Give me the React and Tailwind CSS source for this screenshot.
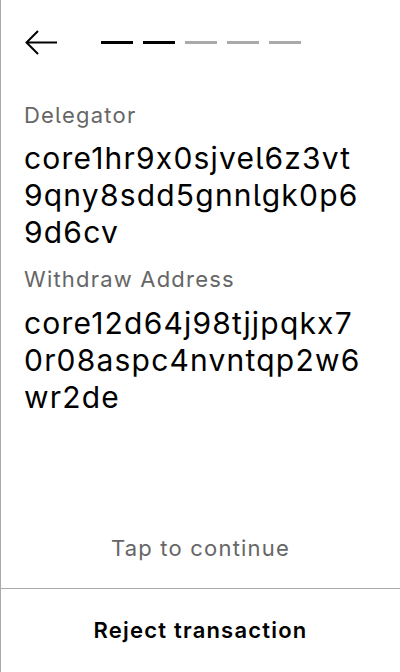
import React from "react";

export default function App() {
  const steps = [true, true, false, false, false];
  return (
    <div className="w-[400px] h-[672px] border-l border-[#aaaaaa] bg-white flex flex-col text-black font-[Inter,sans-serif] [font-feature-settings:'calt'_0,'cv05'_1] tracking-[0.075em]">
      <div className="flex items-center pl-[23px] pt-[30px] h-[56px]">
        <svg width="34" height="28" viewBox="0 0 34 28" fill="none" className="block">
          <path d="M33 13.5H2.5M14 2L2.5 13.5L14 25" stroke="black" strokeWidth="2" />
        </svg>
        <div className="flex gap-[10px] ml-[43px] mt-[-1px]">
          {steps.map((on, i) => (
            <div key={i} className={on ? "w-[32px] h-[3.5px] bg-black" : "w-[32px] h-[3.5px] bg-[#aaaaaa]"} />
          ))}
        </div>
      </div>
      <div className="pl-[23px] pr-[38px] mt-[45px]">
        <div className="text-[22px] leading-[28px] text-[#666666]">Delegator</div>
        <div className="text-[30px] leading-[37px] mt-[11px] break-all">core1hr9x0sjvel6z3vt9qny8sdd5gnnlgk0p69d6cv</div>
        <div className="text-[22px] leading-[28px] text-[#666666] mt-[14px]">Withdraw Address</div>
        <div className="text-[30px] leading-[37px] mt-[12px] break-all">core12d64j98tjjpqkx70r08aspc4nvntqp2w6wr2de</div>
      </div>
      <div className="flex-1" />
      <div className="h-[80px] flex items-center justify-center text-[22px] text-[#666666]">Tap to continue</div>
      <div className="border-t border-[#aaaaaa] h-[84px] flex items-center justify-center">
        <span className="text-[22px] font-semibold">Reject transaction</span>
      </div>
    </div>
  );
}
